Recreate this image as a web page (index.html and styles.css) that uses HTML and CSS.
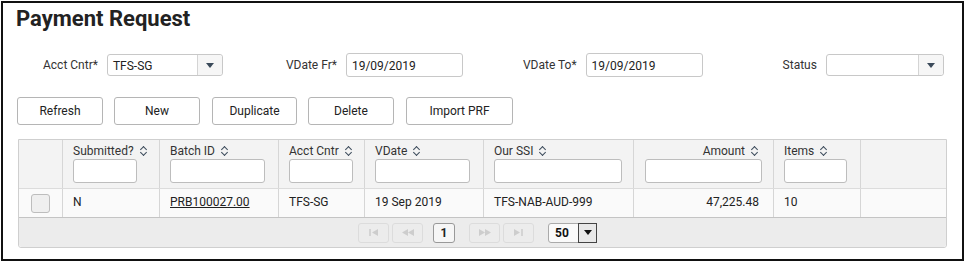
FILE: index.html
```html
<!DOCTYPE html>
<html lang="en">
<head>
  <meta charset="UTF-8">
  <title>Payment Request</title>
  <link rel="stylesheet" href="styles.css">
</head>
<body>
  <div class="frame">
    <h1>Payment Request</h1>

    <!-- Filters -->
    <div class="filters">
      <label class="lbl lbl-acct">Acct Cntr*</label>
      <div class="select sel-acct">
        <span class="sel-value">TFS-SG</span>
        <span class="sel-btn"><svg width="8" height="5" viewBox="0 0 8 5"><path d="M0 0h8L4 5z" fill="#3b4a5a"/></svg></span>
      </div>
      <label class="lbl lbl-fr">VDate Fr*</label>
      <div class="input inp-date">19/09/2019</div>
      <label class="lbl lbl-to">VDate To*</label>
      <div class="input inp-date">19/09/2019</div>
      <label class="lbl lbl-status">Status</label>
      <div class="select sel-status">
        <span class="sel-value"></span>
        <span class="sel-btn"><svg width="8" height="5" viewBox="0 0 8 5"><path d="M0 0h8L4 5z" fill="#3b4a5a"/></svg></span>
      </div>
    </div>

    <!-- Actions -->
    <div class="actions">
      <button class="btn b-refresh">Refresh</button>
      <button class="btn b-new">New</button>
      <button class="btn b-dup">Duplicate</button>
      <button class="btn b-del">Delete</button>
      <button class="btn b-imp">Import PRF</button>
    </div>

    <!-- Grid -->
    <div class="grid">
      <div class="grid-head">
        <div class="cell c-chk"></div>
        <div class="cell c-sub">
          <div class="hd">Submitted? <span class="sort"></span></div>
          <div class="flt w-sub"></div>
        </div>
        <div class="cell c-bat">
          <div class="hd">Batch ID <span class="sort"></span></div>
          <div class="flt w-bat"></div>
        </div>
        <div class="cell c-acc">
          <div class="hd">Acct Cntr <span class="sort"></span></div>
          <div class="flt w-acc"></div>
        </div>
        <div class="cell c-vd">
          <div class="hd">VDate <span class="sort"></span></div>
          <div class="flt w-vd"></div>
        </div>
        <div class="cell c-ssi">
          <div class="hd">Our SSI <span class="sort"></span></div>
          <div class="flt w-ssi"></div>
        </div>
        <div class="cell c-amt">
          <div class="hd right">Amount <span class="sort"></span></div>
          <div class="flt w-amt"></div>
        </div>
        <div class="cell c-itm">
          <div class="hd">Items <span class="sort"></span></div>
          <div class="flt w-itm"></div>
        </div>
        <div class="cell c-end"></div>
      </div>
      <div class="grid-row">
        <div class="cell c-chk"><span class="chk"></span></div>
        <div class="cell c-sub">N</div>
        <div class="cell c-bat"><a href="#">PRB100027.00</a></div>
        <div class="cell c-acc">TFS-SG</div>
        <div class="cell c-vd">19 Sep 2019</div>
        <div class="cell c-ssi">TFS-NAB-AUD-999</div>
        <div class="cell c-amt right">47,225.48</div>
        <div class="cell c-itm">10</div>
        <div class="cell c-end"></div>
      </div>
      <div class="pager">
        <span class="pg pg-first"><svg width="9" height="7" viewBox="0 0 9 7"><path d="M1 0v7" stroke="#cdcdcd" stroke-width="1.5"/><path d="M9 0v7L3 3.5z" fill="#cdcdcd"/></svg></span>
        <span class="pg pg-prev"><svg width="12" height="7" viewBox="0 0 12 7"><path d="M6 0v7L0 3.5zM12 0v7L6 3.5z" fill="#cdcdcd"/></svg></span>
        <span class="pg-num">1</span>
        <span class="pg pg-next"><svg width="12" height="7" viewBox="0 0 12 7"><path d="M0 0v7l6-3.5zM6 0v7l6-3.5z" fill="#cdcdcd"/></svg></span>
        <span class="pg pg-last"><svg width="9" height="7" viewBox="0 0 9 7"><path d="M0 0v7l6-3.5z" fill="#cdcdcd"/><path d="M8 0v7" stroke="#cdcdcd" stroke-width="1.5"/></svg></span>
        <span class="pg-size"><span class="pg-size-val">50</span><span class="pg-size-btn"><svg width="8" height="5" viewBox="0 0 8 5"><path d="M0 0h8L4 5z" fill="#111"/></svg></span></span>
      </div>
    </div>
  </div>
</body>
</html>
```

FILE: styles.css
```css
body {
  margin: 0;
  font-family: Roboto, "Liberation Sans", Arial, sans-serif;
  font-size: 12px;
  color: #333;
  background: #fff;
}

.frame {
  margin: 1px 0 0 1px;
  width: 959px;
  height: 256px;
  border: 2px solid #111;
}

h1 {
  margin: 0;
  padding: 2px 0 0 13px;
  font-size: 22px;
  font-weight: bold;
  color: #222;
  line-height: 27px;
}

/* Filters row */
.filters {
  display: flex;
  align-items: center;
  margin-top: 21px;
  height: 24px;
}

.lbl {
  color: #333;
  font-size: 12px;
}
.lbl-acct { margin-left: 40px; }
.lbl-fr { margin-left: 63px; }
.lbl-to { margin-left: 60px; }
.lbl-status { margin-left: 80px; }

.input, .select {
  border: 1px solid #c8c8c8;
  border-radius: 3px;
  background: #fff;
  box-sizing: border-box;
  margin-left: 9px;
  font-size: 12px;
  color: #222;
}
.input {
  width: 117px;
  height: 24px;
  padding: 5px 0 0 5px;
}
.select {
  display: flex;
  height: 22px;
}
.sel-value {
  flex: 1;
  padding: 4px 0 0 5px;
}
.sel-btn {
  width: 24px;
  border-left: 1px solid #d4d4d4;
  background: #f6f6f6;
  display: flex;
  align-items: center;
  justify-content: center;
  border-radius: 0 3px 3px 0;
}
.sel-acct { width: 116px; }
.sel-status { width: 118px; }

/* Buttons */
.actions {
  display: flex;
  margin: 20px 0 0 14px;
}
.btn {
  height: 28px;
  border: 1px solid #b5b5b5;
  border-radius: 3px;
  background: #fff;
  font-family: inherit;
  font-size: 12px;
  color: #222;
  padding: 0;
}
.b-refresh { width: 86px; margin-right: 11px; }
.b-new { width: 86px; margin-right: 12px; }
.b-dup { width: 85px; margin-right: 11px; }
.b-del { width: 86px; margin-right: 12px; }
.b-imp { width: 107px; }

/* Grid */
.grid {
  margin: 14px 0 0 15px;
  width: 927px;
  border: 1px solid #cfcfcf;
  border-radius: 0 0 3px 3px;
}
.grid-head, .grid-row {
  display: flex;
}
.grid-head {
  background: #f3f3f3;
  height: 48px;
  border-bottom: 1px solid #dcdcdc;
}
.grid-row {
  background: #fafafa;
  height: 28px;
  border-bottom: 1px solid #c4c4c4;
}
.cell {
  box-sizing: border-box;
  border-right: 1px solid #d6d6d6;
  padding: 0 0 0 10px;
  flex-shrink: 0;
}
.grid-row .cell {
  line-height: 26px;
  color: #222;
}
.c-chk { width: 44px; padding: 0; }
.c-sub { width: 97px; }
.c-bat { width: 119px; }
.c-acc { width: 86px; }
.c-vd { width: 119px; }
.c-ssi { width: 150px; }
.c-amt { width: 140px; padding-right: 14px; }
.c-itm { width: 87px; }
.c-end { flex: 1; border-right: none; }

.hd {
  padding-top: 4px;
  height: 14px;
  line-height: 14px;
  color: #333;
  white-space: nowrap;
}
.hd.right { text-align: right; }
.right { text-align: right; }

/* sort arrows: two chevrons stacked */
.sort {
  display: inline-block;
  position: relative;
  width: 8px;
  height: 10px;
  margin-left: 3px;
  vertical-align: -1px;
}
.sort::before, .sort::after {
  content: "";
  position: absolute;
  left: 1px;
  width: 4px;
  height: 4px;
  border-left: 1.5px solid #3b4a5a;
  border-top: 1.5px solid #3b4a5a;
}
.sort::before {
  top: 1px;
  transform: rotate(45deg);
}
.sort::after {
  top: 4px;
  transform: rotate(225deg);
}

.flt {
  margin-top: 1px;
  height: 24px;
  box-sizing: border-box;
  border: 1px solid #bdbdbd;
  border-radius: 3px;
  background: #fff;
}
.w-sub { width: 64px; }
.w-bat { width: 95px; }
.w-acc { width: 64px; }
.w-vd { width: 95px; }
.w-ssi { width: 128px; }
.w-amt { width: 117px; margin-left: 1px; }
.w-itm { width: 63px; }

.c-chk {
  display: flex;
  align-items: center;
  justify-content: center;
}
.chk {
  width: 17px;
  height: 17px;
  border: 1px solid #bdbdbd;
  border-radius: 3px;
  background: #efefef;
}

.grid-row a {
  color: #222;
  text-decoration: underline;
}

/* Pager */
.pager {
  background: #ececec;
  height: 29px;
  display: flex;
  align-items: center;
  padding-left: 339px;
  border-radius: 0 0 3px 3px;
}
.pg {
  width: 29px;
  height: 18px;
  border: 1px solid #dcdcdc;
  border-radius: 3px;
  display: flex;
  align-items: center;
  justify-content: center;
  margin-right: 3px;
}
.pg-prev { margin-right: 10px; }
.pg-next { margin-left: 14px; }
.pg-num {
  width: 20px;
  height: 18px;
  border: 1px solid #999;
  border-radius: 3px;
  background: #f6f6f6;
  text-align: center;
  line-height: 18px;
  font-weight: bold;
  color: #222;
}
.pg-size {
  margin-left: 11px;
  display: flex;
  height: 18px;
  border: 1px solid #aaa;
  border-radius: 3px;
  background: #fafafa;
}
.pg-size-val {
  width: 29px;
  padding-left: 6px;
  line-height: 18px;
  font-weight: bold;
  color: #111;
  box-sizing: border-box;
}
.pg-size-btn {
  width: 17px;
  border: 1px solid #444;
  margin: -1px -1px -1px 0;
  background: #e8e8e8;
  display: flex;
  align-items: center;
  justify-content: center;
}
```
